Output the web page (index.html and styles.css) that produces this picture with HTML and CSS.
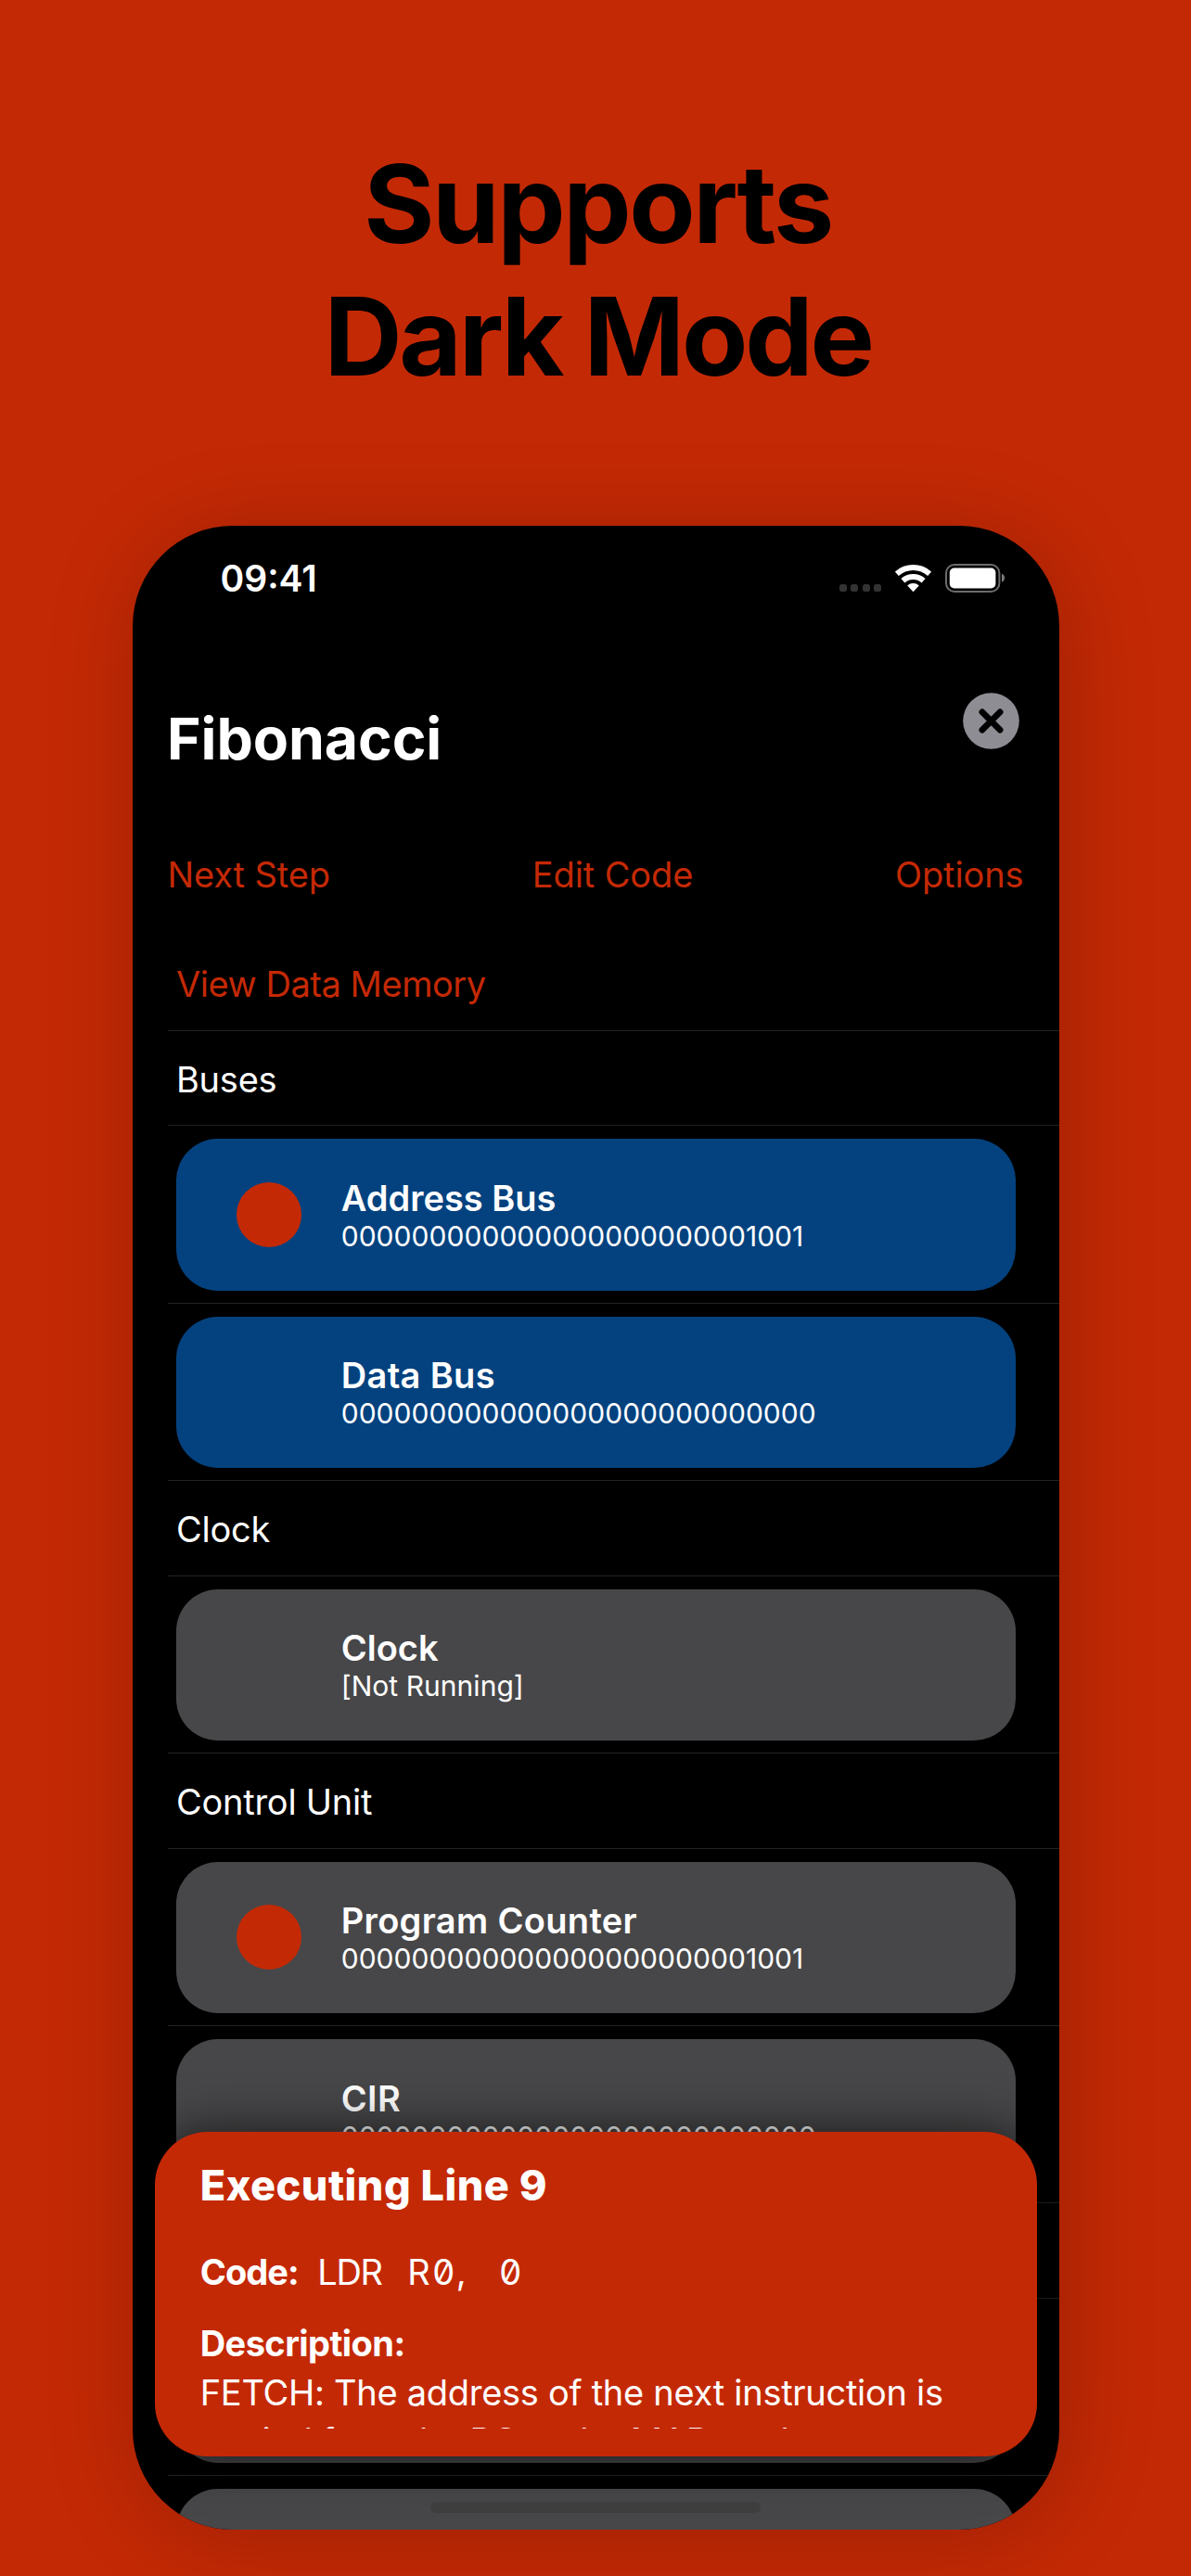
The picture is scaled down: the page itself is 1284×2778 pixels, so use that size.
FILE: index.html
```html
<!DOCTYPE html>
<html lang="en">
<head>
<meta charset="utf-8">
<title>Supports Dark Mode</title>
<link rel="stylesheet" href="styles.css">
</head>
<body>
<main class="poster">
  <h1 class="headline">
    <span class="headline-top">Supports</span>
    <span class="headline-bottom">Dark Mode</span>
  </h1>
  <section class="phone">
    <div class="screen">
      <div class="status">
        <span class="time">09:41</span>
        <div class="status-icons">
          <div class="signal"><i></i><i></i><i></i><i></i></div>
          <svg class="wifi" width="39" height="30" viewBox="0 0 39 30" fill="none" stroke="#fff" stroke-width="6">
            <path d="M1.8 9.8A26.5 26.5 0 0 1 37.2 9.8"/>
            <path d="M8.4 17.2A16.6 16.6 0 0 1 30.6 17.2"/>
            <path d="M13.2 22.5A9.4 9.4 0 0 1 25.8 22.5L19.5 29.3Z" fill="#fff" stroke="none"/>
          </svg>
          <svg class="battery" width="65" height="31" viewBox="0 0 65 31">
            <rect x="1" y="1" width="57.4" height="29" rx="9" fill="none" stroke="#6c6c6c" stroke-width="2"/>
            <rect x="4.8" y="4.6" width="49.6" height="21.8" rx="5" fill="#fff"/>
            <path d="M61 10.8Q64 12.2 64 15.3T61 19.8Z" fill="#7c7c7c"/>
          </svg>
        </div>
      </div>
      <header class="header">
        <h2 class="title">Fibonacci</h2>
        <svg class="close" width="61" height="61" viewBox="0 0 61 61">
          <circle cx="30.5" cy="30.5" r="30.3" fill="#8e8d93"/>
          <path d="M20.9 20.9L40.1 40.1M40.1 20.9L20.9 40.1" stroke="#000" stroke-width="6.8" stroke-linecap="round"/>
        </svg>
      </header>
      <nav class="actions"><a>Next Step</a><a>Edit Code</a><a>Options</a></nav>
      <ul class="list">
        <li class="label link">View Data Memory</li>
        <li class="label">Buses</li>
        <li class="row"><div class="card bus"><span class="dot on"></span><div class="info"><strong>Address Bus</strong><span>000000000000000000000001001</span></div></div></li>
        <li class="row"><div class="card bus"><span class="dot"></span><div class="info"><strong class="wide">Data Bus</strong><span>000000000000000000000000000</span></div></div></li>
        <li class="label">Clock</li>
        <li class="row"><div class="card"><span class="dot"></span><div class="info"><strong>Clock</strong><span>[Not Running]</span></div></div></li>
        <li class="label">Control Unit</li>
        <li class="row"><div class="card"><span class="dot on"></span><div class="info"><strong class="wide">Program Counter</strong><span>000000000000000000000001001</span></div></div></li>
        <li class="row"><div class="card"><span class="dot"></span><div class="info"><strong class="wide">CIR</strong><span>000000000000000000000000000</span></div></div></li>
        <li class="label"></li>
        <li class="row"><div class="card"></div></li>
        <li class="row"><div class="card"></div></li>
      </ul>
      <aside class="panel">
        <div class="panel-body">
          <h3>Executing Line 9</h3>
          <div class="code"><b>Code:</b><span class="op">LDR</span><span class="reg">R0,</span><span class="arg">0</span></div>
          <b class="desc">Description:</b>
          <p>FETCH: The address of the next instruction is<br>copied from the PC to the MAR on the</p>
        </div>
      </aside>
      <div class="home"></div>
    </div>
  </section>
</main>
</body>
</html>
```
FILE: styles.css
```css
* { box-sizing: border-box; }
body {
  margin: 0;
  background: #c42905;
  color: #fff;
  font-family: Inter, "Liberation Sans", sans-serif;
}
h1, h2, h3, p, ul { margin: 0; padding: 0; }
.poster {
  height: 2778px;
  padding-top: 148px;
  overflow: hidden;
}
.headline {
  display: flex;
  flex-direction: column;
  align-items: center;
  padding-left: 5px;
  color: #000;
  font-size: 116.5px;
  font-weight: 700;
  line-height: 143px;
}
.headline-top { letter-spacing: -2.4px; }
.headline-bottom { letter-spacing: -3.2px; }
.phone {
  width: 999px;
  height: 2160.5px;
  margin: 133px 0 0 143px;
  border-radius: 108px;
  box-shadow: 5px 8px 100px rgba(0, 0, 0, 0.2);
}
.screen {
  position: relative;
  height: 100%;
  overflow: hidden;
  border-radius: inherit;
  background: #000;
}
.status {
  display: flex;
  justify-content: space-between;
  align-items: center;
  height: 113px;
  padding: 0 58px 0 94.5px;
}
.time { font-size: 39px; font-weight: 600; }
.status-icons { display: flex; align-items: center; }
.signal { display: flex; gap: 4.4px; margin: 21px 15px 0 0; }
.signal i { width: 8px; height: 8px; border-radius: 2.8px; background: #333; }
.wifi { margin-right: 15px; }
.header {
  display: flex;
  justify-content: space-between;
  align-items: center;
  height: 232px;
  padding: 0 43.5px 1px 37px;
}
.title { font-size: 62.5px; font-weight: 700; letter-spacing: -0.09px; }
.close { margin-bottom: 37px; }
.actions {
  display: flex;
  justify-content: space-between;
  height: 97px;
  padding: 0 38.5px 0 37.5px;
  color: #c42905;
  font-size: 38px;
  line-height: 63px;
  letter-spacing: -0.1px;
}
.list { margin-left: 38px; list-style: none; }
.list li { border-bottom: 1px solid #222324; }
.label {
  height: 102.7px;
  padding: 1px 0 0 9px;
  font-size: 38px;
  line-height: 102px;
  letter-spacing: -0.25px;
}
.label.link { color: #c42905; letter-spacing: -0.45px; }
.row { height: 191.3px; padding: 14px 47px 0 9px; }
.card {
  display: flex;
  align-items: center;
  gap: 42.7px;
  height: 163.5px;
  padding-left: 65px;
  border-radius: 45px;
  background: #474749;
}
.card.bus { background: #04427f; }
.dot { width: 70px; height: 70px; border-radius: 50%; }
.dot.on { background: #c42905; }
.info { display: flex; flex-direction: column; padding-top: 2px; }
.info strong { font-size: 38px; font-weight: 600; line-height: 45px; letter-spacing: 0; }
.info strong.wide { letter-spacing: 0.34px; }
.info span { font-size: 30px; line-height: 37px; letter-spacing: 0.04px; }
.panel {
  position: absolute;
  left: 23.7px;
  top: 1731.8px;
  width: 951.6px;
  height: 350px;
  border-radius: 57px;
  background: #c42905;
  box-shadow: 0 0 55px rgba(0, 0, 0, 0.66);
}
.panel-body { height: 320px; padding: 30px 40px 0 49px; overflow: hidden; }
.panel h3 { font-size: 45px; font-weight: 800; line-height: 56px; letter-spacing: 0.5px; }
.code { display: flex; margin-top: 42.5px; font-size: 38px; line-height: 46px; }
.code b { width: 126.5px; letter-spacing: -0.9px; }
.code span { font-feature-settings: "zero"; }
.op { width: 97px; letter-spacing: -1.25px; }
.reg { width: 99px; letter-spacing: 2.6px; }
.desc { display: block; margin-top: 30.5px; font-size: 38px; line-height: 46px; letter-spacing: -0.56px; }
.panel p { margin: 5.5px -40px 0 0; font-size: 38px; line-height: 51.4px; letter-spacing: -0.28px; white-space: nowrap; }
.home {
  position: absolute;
  left: 321px;
  top: 2131px;
  width: 356px;
  height: 12px;
  border-radius: 6px;
  background: #3e3e3e;
}
```
